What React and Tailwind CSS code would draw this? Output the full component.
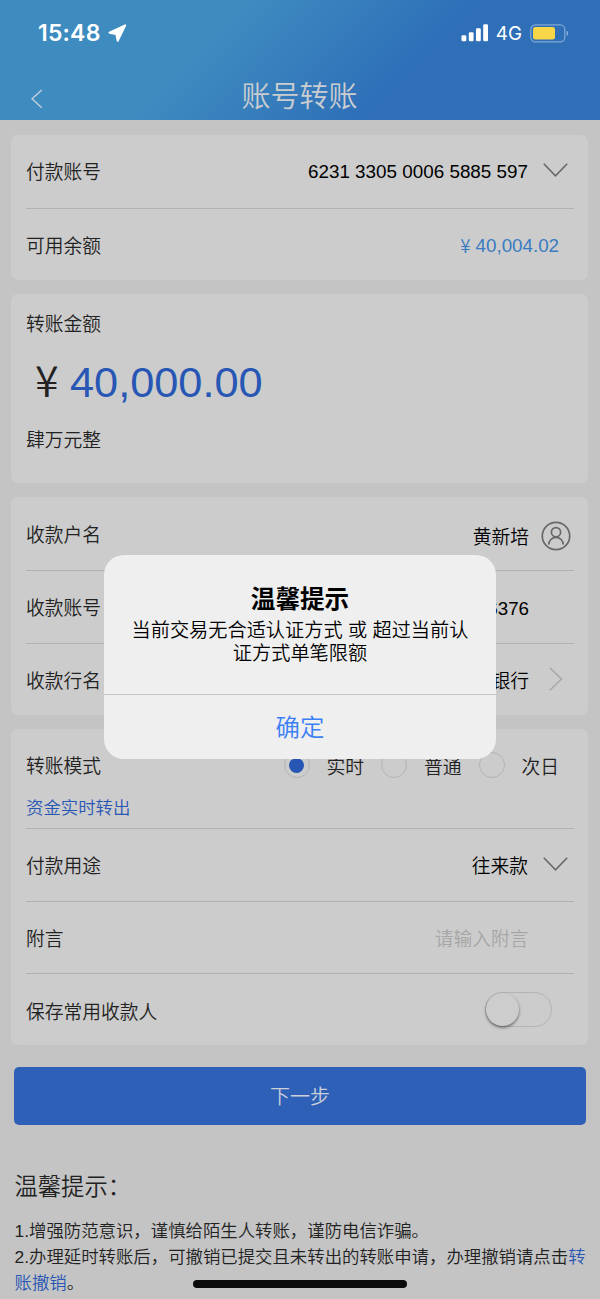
import React, { useState } from 'react';

function Chevron({ dir = 'down' }) {
  if (dir === 'right') {
    return (
      <svg width="14" height="24" viewBox="0 0 14 24" fill="none" stroke="#a6a6a6" strokeWidth="1.4">
        <path d="M0.8 0.8L12.6 12L0.8 23.2" />
      </svg>
    );
  }
  return (
    <svg width="25" height="14" viewBox="0 0 25 14" fill="none" stroke="#686868" strokeWidth="1.6">
      <path d="M0.8 0.8L12.5 12.8L24.2 0.8" />
    </svg>
  );
}

function StatusBar() {
  return (
    <div className="flex h-[66px] items-center pl-[38px] pr-[31px] text-white">
      <span className="font-['Inter'] text-[23px] font-semibold tracking-[0.2px]">15:48</span>
      <svg className="ml-[7px]" width="19" height="19" viewBox="0 0 19 19" fill="#fff" stroke="#fff" strokeWidth="2" strokeLinejoin="round">
        <path d="M17.2 1.4L9.7 16.8L8.2 9.9L1.5 8.7Z" />
      </svg>
      <svg className="ml-auto" width="28" height="18" viewBox="0 0 28 18" fill="#fff">
        <rect x="0.5" y="11.3" width="4.8" height="6" rx="1.2" />
        <rect x="7.8" y="8.2" width="4.8" height="9.1" rx="1.2" />
        <rect x="15" y="4.2" width="4.8" height="13.1" rx="1.2" />
        <rect x="22.2" y="0.3" width="4.8" height="17" rx="1.2" />
      </svg>
      <span className="ml-[7px] mt-px font-['Inter'] text-[18.8px] font-normal">4G</span>
      <svg className="ml-[8px]" width="39" height="19" viewBox="0 0 39 19" fill="none">
        <rect x="0.8" y="0.9" width="34" height="17" rx="4.6" stroke="#fff" strokeOpacity="0.4" strokeWidth="1.2" />
        <rect x="3" y="3" width="22" height="12.6" rx="2.4" fill="#f8d648" />
        <path d="M36.6 6.5C38.6 7.3 38.6 11.3 36.6 12.1Z" fill="#fff" fillOpacity="0.45" />
      </svg>
    </div>
  );
}

function Card({ children, className = '' }) {
  return (
    <section className={`rounded-[7px] bg-[#cccccc] pl-[15px] pr-[14px] ${className}`}>{children}</section>
  );
}

function Row({ label, children, className = '', last }) {
  return (
    <div className={`flex items-center ${last ? '' : 'border-b border-[#b1b1b1]'} ${className}`}>
      <span className="text-[#222]">{label}</span>
      <div className="ml-auto flex items-center text-black">{children}</div>
    </div>
  );
}

function Radio({ label, checked, onClick }) {
  return (
    <button onClick={onClick} className="flex items-center gap-[17px]">
      <span className="mb-[4px] flex size-[26px] items-center justify-center rounded-full border-[1.5px] border-[#b4b4b4]">
        {checked && <span className="size-[15px] rounded-full bg-[#2756b4]" />}
      </span>
      <span className="mt-[2px] text-[#222]">{label}</span>
    </button>
  );
}

function Alert() {
  return (
    <div className="absolute inset-x-0 top-[555px] flex justify-center">
      <div className="flex h-[204px] w-[392px] flex-col overflow-hidden rounded-[20px] bg-[#efefef] text-center text-black">
        <div className="h-[139px] pt-[29px]">
          <h2 className="text-[24.6px] leading-[32px] font-bold">温馨提示</h2>
          <p className="mt-[3px] text-[19.2px] leading-[23px]">
            当前交易无合适认证方式 或 超过当前认
            <br />
            证方式单笔限额
          </p>
        </div>
        <button className="flex-1 border-t border-[#c8c8c8] pt-[2px] text-[24.4px] text-[#3b7ff6]">确定</button>
      </div>
    </div>
  );
}

export default function App() {
  const [mode, setMode] = useState('实时');

  return (
    <div className="relative h-[1299px] w-[600px] overflow-hidden bg-[#c4c4c4] font-['Liberation_Sans','Noto_Sans_CJK_SC',sans-serif] text-[18.75px] leading-[28px] font-[350]">
      <header className="h-[120px] bg-[linear-gradient(135deg,#3e8bc0_35%,#2e6fb8_67%)]">
        <StatusBar />
        <div className="flex h-[60px] items-center justify-center pt-[2px]">
          <svg className="absolute left-[31px] top-[89px]" width="12" height="20" viewBox="0 0 12 20" fill="none" stroke="#c9d3dc" strokeWidth="1.3">
            <path d="M10.8 1L1 9.8L10.8 18.8" />
          </svg>
          <h1 className="mr-px text-[29px] text-[#cbcdd0]">账号转账</h1>
        </div>
      </header>

      <main className="flex flex-col gap-[14.5px] pl-[11px] pr-[12px] pt-[15px]">
        <Card className="h-[144.5px]">
          <Row label="付款账号" className="h-[74px] pt-[2px]">
            <span className="mr-[15px] mb-px text-[18.85px]">6231 3305 0006 5885 597</span>
            <span className="mr-[6px] mb-[6px]"><Chevron /></span>
          </Row>
          <Row label="可用余额" className="h-[72px] pt-[3px]" last>
            <span className="mr-[15px] flex items-center gap-[5px] text-[#397bc2]">
              <span className="mb-[4px] font-['Noto_Sans_CJK_SC']">¥</span>
              <span className="mb-px">40,004.02</span>
            </span>
          </Row>
        </Card>

        <Card className="h-[188.5px] pt-[17px]">
          <p className="text-[#222]">转账金额</p>
          <div className="mt-[19px] flex h-[48px] items-center pl-[9px] text-[43.3px]">
            <span className="mb-[9px] w-[25px] font-['Noto_Sans_CJK_SC'] text-[43px] text-[#222]">¥</span>
            <span className="ml-[10px] text-[#2756b4]">40,000.00</span>
          </div>
          <p className="mt-[21px] text-[#222]">肆万元整</p>
        </Card>

        <Card className="h-[217.5px]">
          <Row label="收款户名" className="h-[74px] pt-[4px]">
            <span className="mr-[12px] mt-[5px]">黄新培</span>
            <svg className="mr-[3px] mt-px" width="30" height="30" viewBox="0 0 30 30" fill="none" stroke="#686868" strokeWidth="1.7">
              <circle cx="15" cy="15" r="13.7" />
              <circle cx="15" cy="11.2" r="4.6" />
              <path d="M7.8 23.6A7.2 7.2 0 0 1 22.2 23.6" />
            </svg>
          </Row>
          <Row label="收款账号" className="h-[73px] pt-[4px]">
            <span className="mr-[45px] mb-px">6376</span>
          </Row>
          <Row label="收款行名" className="h-[70.5px] pt-[5px]" last>
            <span className="mr-[20px]">银行</span>
            <span className="mr-[11px] mb-[6px]"><Chevron dir="right" /></span>
          </Row>
        </Card>

        <Card className="h-[316px]">
          <div className="h-[100px] border-b border-[#b1b1b1] pt-[23px]">
            <Row label="转账模式" className="h-[30px]" last>
              <div className="mr-[15px] flex gap-[17px]">
                {['实时', '普通', '次日'].map((m) => (
                  <Radio key={m} label={m} checked={mode === m} onClick={() => setMode(m)} />
                ))}
              </div>
            </Row>
            <p className="mt-[12px] text-[17.4px] text-[#2756b4]">资金实时转出</p>
          </div>
          <Row label="付款用途" className="h-[72.5px] pt-[4px]">
            <span className="mr-[15px]">往来款</span>
            <span className="mr-[6px] mb-[6px]"><Chevron /></span>
          </Row>
          <Row label="附言" className="h-[72.5px] pt-[5px]">
            <span className="mr-[45.5px] text-[#a6a6a6]">请输入附言</span>
          </Row>
          <Row label="保存常用收款人" className="h-[72px] pt-[5px]" last>
            <span className="mr-[22px] mb-[6px] flex h-[35px] w-[67px] items-center rounded-full border-[1.5px] border-[#b4b4b4]">
              <span className="size-[33px] rounded-full bg-[#cdcdcd] shadow-[0_1.5px_3px_rgba(0,0,0,0.5)]" />
            </span>
          </Row>
        </Card>
      </main>

      <button className="mx-[14px] mt-[22px] h-[58px] w-[572px] rounded-[5px] bg-[#2e60b8] pt-[2px] text-[20px] text-[#cbd0d8]">
        下一步
      </button>

      <footer className="pl-[14.5px] pt-[46px] text-[#222]">
        <h3 className="text-[23.3px] leading-[32px]">温馨提示：</h3>
        <div className="mt-[15px] text-[17.4px] leading-[26px] whitespace-nowrap">
          <p>1.增强防范意识，谨慎给陌生人转账，谨防电信诈骗。</p>
          <p>
            2.办理延时转账后，可撤销已提交且未转出的转账申请，办理撤销请点击
            <a className="text-[#2756b4]">转<br />账撤销</a>。
          </p>
        </div>
      </footer>

      <Alert />
      <div className="absolute bottom-[11.5px] left-[193px] h-[7.5px] w-[214px] rounded-full bg-[#0a0a0a]" />
    </div>
  );
}
